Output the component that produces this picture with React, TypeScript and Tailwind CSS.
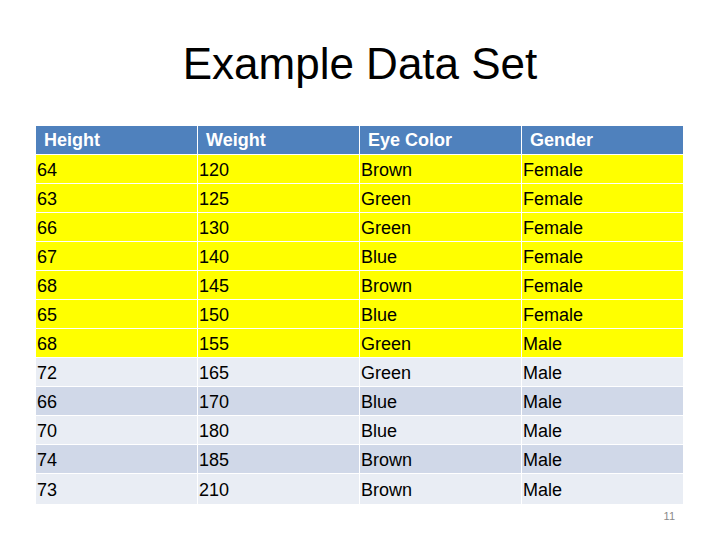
import React from "react";

const header = ["Height", "Weight", "Eye Color", "Gender"];
const rows: [string, string, string, string][] = [
  ["64", "120", "Brown", "Female"],
  ["63", "125", "Green", "Female"],
  ["66", "130", "Green", "Female"],
  ["67", "140", "Blue", "Female"],
  ["68", "145", "Brown", "Female"],
  ["65", "150", "Blue", "Female"],
  ["68", "155", "Green", "Male"],
  ["72", "165", "Green", "Male"],
  ["66", "170", "Blue", "Male"],
  ["70", "180", "Blue", "Male"],
  ["74", "185", "Brown", "Male"],
  ["73", "210", "Brown", "Male"],
];

export default function App() {
  return (
    <div
      className="w-[720px] h-[540px] bg-white relative overflow-hidden"
      style={{ fontFamily: '"Liberation Sans", Arial, sans-serif' }}
    >
      <div className="pt-[42px] h-[126px] text-center text-[44px] leading-none text-black">
        Example Data Set
      </div>
      <div className="ml-[36px] w-[647px]">
        <div className="grid grid-cols-[161px_162px_162px_162px] h-[29px] bg-[#4F81BD] border-b border-white">
          {header.map((h, i) => (
            <div
              key={h}
              className={`flex items-center pl-[8px] pt-[1px] text-white font-bold text-[18px] ${i > 0 ? "border-l border-white" : ""}`}
            >
              {h}
            </div>
          ))}
        </div>
        {rows.map((r, ri) => {
          const bg = ri < 7 ? "bg-[#FFFF00]" : ri % 2 === 1 ? "bg-[#E9EDF4]" : "bg-[#D0D8E8]";
          return (
            <div
              key={ri}
              className={`grid grid-cols-[161px_162px_162px_162px] h-[29px] ${bg} ${ri < rows.length - 1 ? "border-b border-white" : "h-[30px]"}`}
            >
              {r.map((c, ci) => (
                <div
                  key={ci}
                  className={`flex items-center pl-[1px] pt-[2px] text-black text-[18px] ${ci > 0 ? "border-l border-white" : ""}`}
                >
                  {c}
                </div>
              ))}
            </div>
          );
        })}
      </div>
      <div className="absolute right-[45px] top-[508px] text-[11px] text-[#8a8a8a]">11</div>
    </div>
  );
}
